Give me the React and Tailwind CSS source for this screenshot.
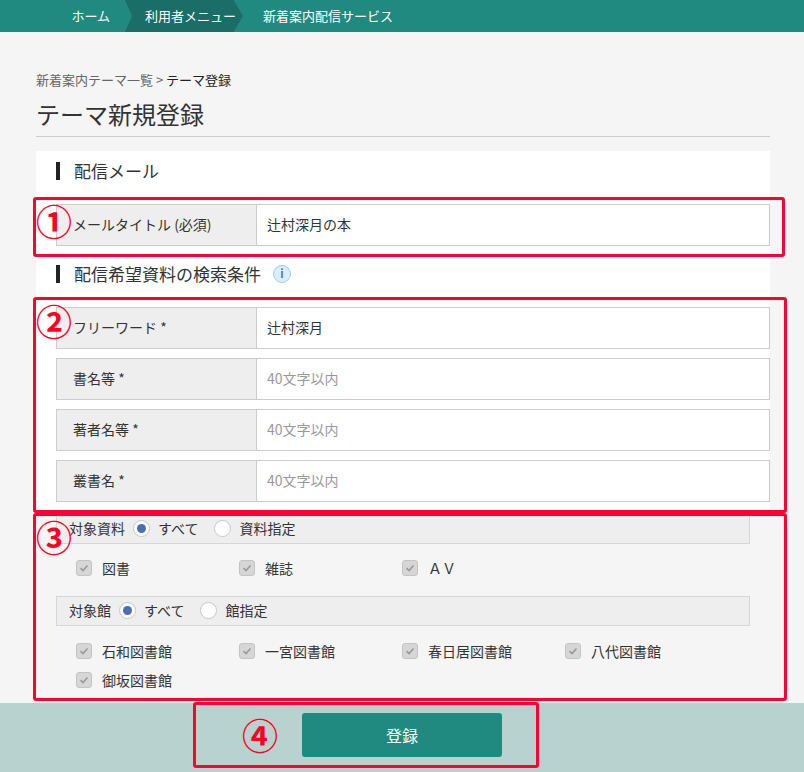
const font = { fontFamily: '"Noto Sans CJK JP", "Liberation Sans", sans-serif' };

function Row({ label, value, placeholder }) {
  return (
    <div className="flex h-[42px] border border-[#cccccc] ml-5">
      <div className="w-[200px] bg-[#eeeeee] border-r border-[#cccccc] flex items-center pl-4 text-[14px] text-[#333]">{label}</div>
      <div className={`flex-1 bg-white flex items-center pl-[10px] text-[14px] ${value ? "text-[#333]" : "text-[#999]"}`}>{value || placeholder}</div>
    </div>
  );
}

function Check({ label, w = "w-[163px]" }) {
  return (
    <div className={`flex items-center gap-[10px] ${w}`}>
      <span className="w-[16px] h-[16px] rounded-[3px] bg-[#d6d6d6] border border-[#c4c4c4] flex items-center justify-center">
        <svg width="10" height="10" viewBox="0 0 10 10"><path d="M1.5 5.2 L4 7.5 L8.5 2.5" stroke="#999" strokeWidth="1.6" fill="none" /></svg>
      </span>
      <span className="text-[14px] text-[#333]">{label}</span>
    </div>
  );
}

function Radio({ on, label }) {
  return (
    <div className="flex items-center gap-[8px]">
      <span className="w-[17px] h-[17px] rounded-full bg-white border border-[#c8c8c8] flex items-center justify-center">
        {on && <span className="w-[9px] h-[9px] rounded-full bg-[#4a6fb5]" />}
      </span>
      <span className="mr-2">{label}</span>
    </div>
  );
}

function Mark({ n, className }) {
  return (
    <div className={`absolute border-[3px] border-[#ff0033] rounded-[3px] pointer-events-none ${className}`}>
      {n && <span className="absolute left-[0px] top-[2px] text-[#ff0022] text-[36px] font-bold leading-none">{n}</span>}
    </div>
  );
}

function SecHead({ children }) {
  return (
    <div className="flex items-center h-[40px] pl-5 text-[17px] text-[#333]">
      <span className="w-[4px] h-[18px] bg-[#222] mr-[14px]" />
      {children}
    </div>
  );
}

export default function App() {
  return (
    <div className="relative w-[804px] h-[772px] bg-[#f5f5f5] overflow-hidden" style={font}>
      <div className="h-[32px] bg-[#218a80] flex text-white text-[13px]">
        <div className="w-[125px] flex items-center justify-end pr-[15px]">ホーム</div>
        <div className="w-[118px] bg-[#1b6e67] flex items-center pl-[20px]" style={{ clipPath: "polygon(0 0, 92% 0, 100% 50%, 92% 100%, 0 100%, 6% 50%)" }}>利用者メニュー</div>
        <div className="flex items-center pl-[20px]">新着案内配信サービス</div>
      </div>
      <div className="px-[36px] pt-[38px] w-[770px] box-content pr-0">
        <div className="text-[13px] text-[#666]">新着案内テーマ一覧 &gt; <span className="text-[#222]">テーマ登録</span></div>
        <div className="text-[24px] text-[#333] mt-[6px] pb-[4px] border-b border-[#cccccc] w-[734px]">テーマ新規登録</div>
        <div className="w-[734px] mt-[14px] bg-white">
          <SecHead>配信メール</SecHead>
          <div className="mt-[13px] pb-[8px]"><Row label="メールタイトル (必須)" value="辻村深月の本" /></div>
          <SecHead>配信希望資料の検索条件 <span className="ml-3 w-[18px] h-[18px] rounded-full bg-[#dbeefb] border border-[#9fcdf0] text-[#3a7bc8] text-[11px] font-bold flex items-center justify-center">i</span></SecHead>
          <div className="mt-[13px] flex flex-col gap-[9px] pb-[12px]">
            <Row label="フリーワード *" value="辻村深月" />
            <Row label="書名等 *" placeholder="40文字以内" />
            <Row label="著者名等 *" placeholder="40文字以内" />
            <Row label="叢書名 *" placeholder="40文字以内" />
          </div>
        </div>
        <div className="w-[734px] pb-[10px]">
          <div className="ml-5 mr-5 h-[30px] bg-[#eeeeee] border border-[#d6d6d6] flex items-center pl-[12px] gap-[8px] text-[14px] text-[#333]">
            <span>対象資料</span><Radio on label="すべて" /><Radio label="資料指定" />
          </div>
          <div className="flex ml-[40px] mt-[14px] mb-[17px]"><Check label="図書" /><Check label="雑誌" /><Check label="ＡＶ" /></div>
          <div className="ml-5 mr-5 h-[30px] bg-[#eeeeee] border border-[#d6d6d6] flex items-center pl-[12px] gap-[8px] text-[14px] text-[#333]">
            <span>対象館</span><Radio on label="すべて" /><Radio label="館指定" />
          </div>
          <div className="flex flex-wrap ml-[40px] mt-[15px] gap-y-[8px] w-[680px]">
            <Check label="石和図書館" /><Check label="一宮図書館" /><Check label="春日居図書館" /><Check label="八代図書館" /><Check label="御坂図書館" />
          </div>
        </div>
      </div>
      <div className="absolute left-0 right-0 top-[703px] bottom-0 bg-[#b8d3cf] flex justify-center pt-[10px]">
        <div className="w-[200px] h-[44px] bg-[#218a80] rounded-[3px] text-white text-[16px] flex items-center justify-center">登録</div>
      </div>
      <Mark n="①" className="left-[33px] top-[197px] w-[752px] h-[60px]" />
      <Mark n="②" className="left-[33px] top-[297px] w-[754px] h-[216px]" />
      <Mark n="③" className="left-[33px] top-[513px] w-[754px] h-[188px]" />
      <Mark className="left-[193px] top-[702px] w-[346px] h-[66px]" />
      <span className="absolute left-[242px] top-[716px] text-[#ff0022] text-[36px] font-bold leading-none">④</span>
    </div>
  );
}
